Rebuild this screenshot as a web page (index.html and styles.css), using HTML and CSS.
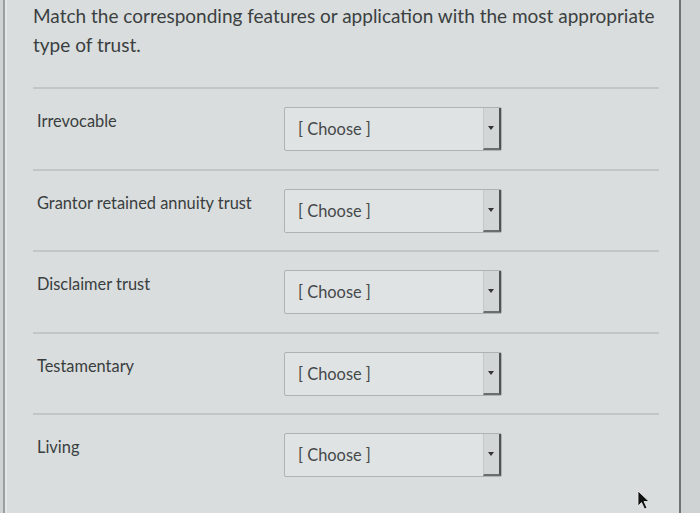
FILE: index.html
```html
<!DOCTYPE html>
<html>
<head>
    <meta charset="utf-8">
    <title>Matching question</title>
    <link rel="stylesheet" href="styles.css">
</head>
<body>
    <div class="page">
        <div class="question">
            <p class="prompt">Match the corresponding features or application with the most appropriate type of trust.</p>

            <div class="answers">
                <div class="answer-row">
                    <div class="answer-label">Irrevocable</div>
                    <div class="select">
                        <span class="select-text">[ Choose ]</span>
                        <span class="select-arrow"></span>
                    </div>
                </div>
                <div class="answer-row">
                    <div class="answer-label">Grantor retained annuity trust</div>
                    <div class="select">
                        <span class="select-text">[ Choose ]</span>
                        <span class="select-arrow"></span>
                    </div>
                </div>
                <div class="answer-row">
                    <div class="answer-label">Disclaimer trust</div>
                    <div class="select">
                        <span class="select-text">[ Choose ]</span>
                        <span class="select-arrow"></span>
                    </div>
                </div>
                <div class="answer-row">
                    <div class="answer-label">Testamentary</div>
                    <div class="select">
                        <span class="select-text">[ Choose ]</span>
                        <span class="select-arrow"></span>
                    </div>
                </div>
                <div class="answer-row">
                    <div class="answer-label">Living</div>
                    <div class="select">
                        <span class="select-text">[ Choose ]</span>
                        <span class="select-arrow"></span>
                    </div>
                </div>
            </div>
        </div>

        <svg class="cursor" width="14" height="20" viewBox="0 0 14 20">
            <path d="M1 1 L1 16 L4.5 12.5 L7.5 19 L10 18 L7 11.5 L12 11.5 Z" fill="#111" stroke="#eee" stroke-width="0.8"/>
        </svg>
    </div>
</body>
</html>
```

FILE: styles.css
```css
body {
    margin: 0;
    padding: 0;
    font-family: Lato, 'Noto Sans', sans-serif;
    background: #cfd3d3;
    overflow: hidden;
}

.page {
    position: relative;
    margin-left: 3px;
    width: 678px;
    height: 513px;
    box-sizing: border-box;
    background: #d9dddd;
    border-left: 2px solid #9a9e9f;
    border-right: 2px solid #6f7374;
    box-shadow: inset 2px 0 0 #e4e7e7;
}

.question {
    padding: 1px 20px 0 28px;
}

.prompt {
    margin: 0 0 28px 0;
    font-size: 19px;
    line-height: 29px;
    color: #3b3f41;
    width: 625px;
}

.answer-row {
    display: flex;
    align-items: flex-start;
    height: 81.5px;
    border-top: 2px solid #c2c6c6;
    box-sizing: border-box;
}

.answer-label {
    width: 247px;
    padding: 22px 0 0 4px;
    font-size: 16.4px;
    line-height: 20px;
    color: #3a3d40;
}

.select {
    display: flex;
    margin-top: 18px;
    width: 218px;
    height: 44px;
    box-sizing: border-box;
    border: 1px solid #aeb2b3;
    border-radius: 2px;
    background: #e0e3e3;
}

.select-text {
    flex: 1;
    padding-left: 13px;
    font-size: 16.4px;
    line-height: 42px;
    color: #45484a;
}

.select-arrow {
    position: relative;
    width: 15px;
    border-left: 1px solid #c4c8c8;
    border-right: 2px solid #4f5354;
    border-bottom: 2px solid #6a6e6f;
    background: #d2d6d6;
}

.select-arrow::after {
    content: '';
    position: absolute;
    left: 4px;
    top: 18px;
    border-left: 3.5px solid transparent;
    border-right: 3.5px solid transparent;
    border-top: 4px solid #333;
}

.cursor {
    position: absolute;
    left: 632px;
    top: 490px;
}
```
